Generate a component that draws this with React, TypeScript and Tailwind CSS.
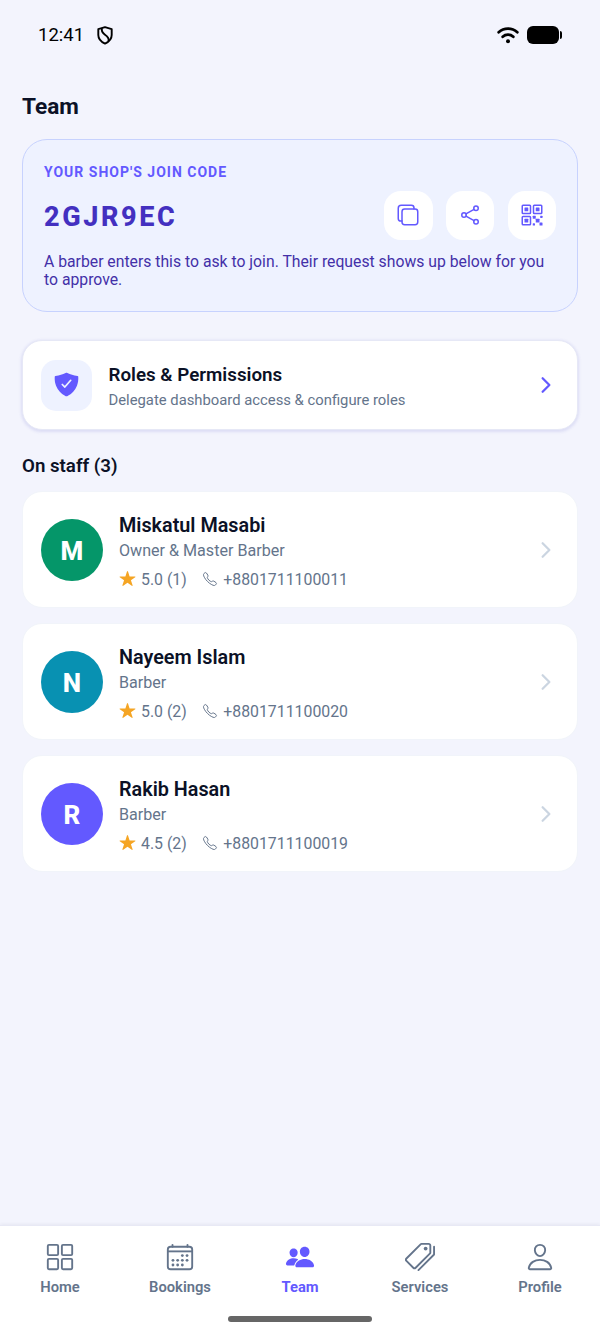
import type { IconType } from 'react-icons'
import {
  IoCalendarOutline,
  IoCallOutline,
  IoChevronForward,
  IoCopyOutline,
  IoGridOutline,
  IoPeople,
  IoPersonOutline,
  IoPricetagsOutline,
  IoQrCodeOutline,
  IoShareSocialOutline,
  IoShieldCheckmark,
  IoStar,
} from 'react-icons/io5'

type Member = {
  name: string
  role: string
  rating: string
  phone: string
  color: string
}

type Tab = { label: string; icon: IconType; active?: boolean }

const members: Member[] = [
  { name: 'Miskatul Masabi', role: 'Owner & Master Barber', rating: '5.0 (1)', phone: '+8801711100011', color: 'bg-[#059669]' },
  { name: 'Nayeem Islam', role: 'Barber', rating: '5.0 (2)', phone: '+8801711100020', color: 'bg-[#0891b2]' },
  { name: 'Rakib Hasan', role: 'Barber', rating: '4.5 (2)', phone: '+8801711100019', color: 'bg-[#6359ff]' },
]

const tabs: Tab[] = [
  { label: 'Home', icon: IoGridOutline },
  { label: 'Bookings', icon: IoCalendarOutline },
  { label: 'Team', icon: IoPeople, active: true },
  { label: 'Services', icon: IoPricetagsOutline },
  { label: 'Profile', icon: IoPersonOutline },
]

function StatusBar() {
  return (
    <div className="flex h-[70px] items-center justify-between pr-[38px] pl-[38px] text-black">
      <div className="flex items-center gap-[13px]">
        <span className="text-[18.5px] leading-none">12:41</span>
        <svg width="16" height="19" viewBox="0 0 16 19" fill="none" stroke="currentColor" strokeWidth="1.900" strokeLinejoin="round">
          <path d="M8 1.200 14.700 3.200V9c0 4-2.700 6.800-6.700 8.600C4 15.800 1.300 13 1.300 9V3.200Z" />
          <path d="M5 2.300c-.9 3 .3 4.600 3 6.400 2.800 1.900 4.300 3.600 3.500 6.600" />
        </svg>
      </div>
      <div className="flex items-center gap-[8px]">
        <svg width="22" height="17" viewBox="0 0 22 17" fill="none" stroke="currentColor" strokeWidth="2.800" strokeLinecap="round">
          <path d="M1.700 5.300C7 .4 15 .4 20.300 5.300" />
          <path d="M5.700 9.700c3-2.700 7.600-2.700 10.600 0" />
          <circle cx="11" cy="14.200" r="2" fill="currentColor" stroke="none" />
        </svg>
        <div className="flex items-center gap-px">
          <div className="h-[18px] w-[32px] rounded-[6px] bg-black" />
          <div className="h-2 w-[2px] rounded-r-sm bg-black" />
        </div>
      </div>
    </div>
  )
}

function JoinCode() {
  const actions = [IoCopyOutline, IoShareSocialOutline, IoQrCodeOutline]

  return (
    <section className="mt-[19px] h-[173px] rounded-[25px] border-[1.500px] border-[#c7d2fe] bg-[#eef2ff] px-[21px] pt-[24px]">
      <p className="text-[14px] leading-[16px] font-bold tracking-[1px] text-[#6359ff]">YOUR SHOP'S JOIN CODE</p>
      <div className="mt-[11px] flex items-center justify-between">
        <span className="mt-[4px] text-[27px] leading-none font-extrabold tracking-[2.600px] text-[#4330c0]">2GJR9EC</span>
        <div className="flex gap-[13.200px]">
          {actions.map((Icon, i) => (
            <button key={i} className="flex size-[48.500px] items-center justify-center rounded-[17px] bg-white text-[#6359ff]">
              <Icon size={24} />
            </button>
          ))}
        </div>
      </div>
      <p className="mt-[13px] text-[15.750px] leading-[18.500px] whitespace-nowrap text-[#4330a8]">
        A barber enters this to ask to join. Their request shows up below for you
        <br />
        to approve.
      </p>
    </section>
  )
}

function RolesCard() {
  return (
    <section className="mt-[28px] flex h-[90px] items-center rounded-[20px] border border-[#e6e8f6] bg-white pr-[19px] pl-[18px] shadow-[0_1px_3px_1px_rgba(70,70,190,0.130)]">
      <div className="flex size-[51px] items-center justify-center rounded-[15px] bg-[#eef2ff] pb-px text-[#6359ff]">
        <IoShieldCheckmark size={27} />
      </div>
      <div className="ml-[16.500px] flex-1">
        <h2 className="mt-[2px] text-[18.800px] leading-[24px] font-semibold text-[#0b1126]">Roles & Permissions</h2>
        <p className="mt-[3px] text-[14.820px] leading-[20px] text-[#64748b]">Delegate dashboard access & configure roles</p>
      </div>
      <IoChevronForward size={24} className="mb-px text-[#6359ff]" />
    </section>
  )
}

function MemberCard({ member }: { member: Member }) {
  return (
    <li className="flex h-[117px] items-center rounded-[20px] border border-[#f1f4fa] bg-white pr-[19px] pl-[18px]">
      <div className={`flex size-[62px] items-center justify-center rounded-full pt-[3px] text-[26px] font-extrabold text-white ${member.color}`}>
        {member.name[0]}
      </div>
      <div className="ml-[16px] flex-1">
        <h3 className="mt-[4px] text-[19.800px] leading-[24px] font-semibold text-[#0b1126]">{member.name}</h3>
        <p className="mt-[3px] text-[16.100px] leading-[20px] text-[#64748b]">{member.role}</p>
        <div className="mt-[9px] flex items-center text-[15.850px] leading-[20px] text-[#64748b]">
          <IoStar size={17} className="mb-[2px] text-[#f5a524]" />
          <span className="ml-[5px]">{member.rating}</span>
          <IoCallOutline size={16} className="mb-px ml-[15.500px]" />
          <span className="ml-[5px]">{member.phone}</span>
        </div>
      </div>
      <IoChevronForward size={24} className="mt-px text-[#cbd5e1]" />
    </li>
  )
}

function TabBar() {
  return (
    <nav className="flex h-[110px] flex-col items-center border-t border-[#e8e9f5] bg-white shadow-[0_-1px_3px_rgba(30,27,75,0.060)]">
      <div className="flex w-full">
        {tabs.map(({ label, icon: Icon, active }) => (
          <div
            key={label}
            className={`flex flex-1 flex-col items-center pt-[16px] ${active ? 'text-[#6359ff]' : 'text-[#64748b]'}`}
          >
            <Icon size={30} />
            <span className={`mt-[6px] text-[14.750px] leading-[18px] ${active ? 'font-bold' : 'font-semibold'}`}>{label}</span>
          </div>
        ))}
      </div>
      {/* gesture handle */}
      <div className="mt-[20px] h-[6px] w-[144px] rounded-full bg-[#666666]" />
    </nav>
  )
}

export default function App() {
  return (
    <div className="flex h-[1335px] w-[600px] flex-col bg-[#f3f4fd] font-['Roboto',sans-serif]">
      <StatusBar />
      <main className="flex-1 px-[22px] pt-[24px]">
        <h1 className="text-[22.600px] leading-[26px] font-bold text-[#0b1126]">Team</h1>
        <JoinCode />
        <RolesCard />
        <h2 className="mt-[24px] text-[18.700px] leading-[24px] font-semibold text-[#0b1126]">On staff (3)</h2>
        <ul className="mt-[13px] flex flex-col gap-[15px]">
          {members.map(m => (
            <MemberCard key={m.name} member={m} />
          ))}
        </ul>
      </main>
      <TabBar />
    </div>
  )
}
